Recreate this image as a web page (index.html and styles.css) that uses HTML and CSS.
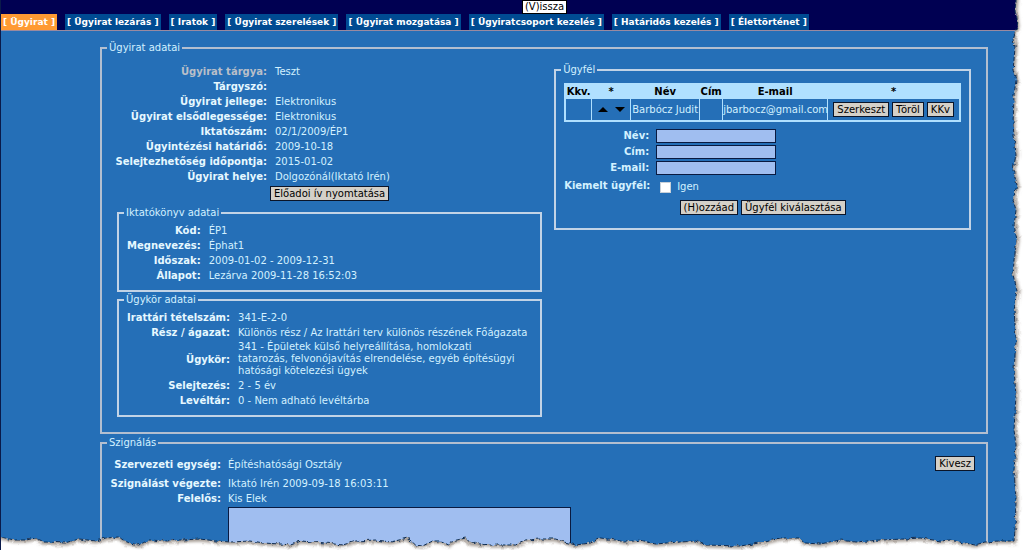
FILE: index.html
```html
<!DOCTYPE html>
<html lang="hu">
<head>
<meta charset="utf-8">
<title>Ügyirat</title>
<link rel="stylesheet" href="styles.css">
</head>
<body>
<div class="page">
  <header class="header">
    <div class="header-actions"><button type="button" class="back">(V)issza</button></div>
    <nav class="tabs">
      <a href="#" class="tab active">[ Ügyirat ]</a>
      <a href="#" class="tab">[ Ügyirat lezárás ]</a>
      <a href="#" class="tab">[ Iratok ]</a>
      <a href="#" class="tab">[ Ügyirat szerelések ]</a>
      <a href="#" class="tab">[ Ügyirat mozgatása ]</a>
      <a href="#" class="tab">[ Ügyiratcsoport kezelés ]</a>
      <a href="#" class="tab">[ Határidős kezelés ]</a>
      <a href="#" class="tab">[ Élettörténet ]</a>
    </nav>
  </header>

  <main class="main">
    <fieldset class="box outer case">
      <legend>Ügyirat adatai</legend>
      <div class="columns">
        <div class="left">
          <dl class="list case-list">
            <dt class="muted">Ügyirat tárgya:</dt><dd>Teszt</dd>
            <dt>Tárgyszó:</dt><dd></dd>
            <dt>Ügyirat jellege:</dt><dd>Elektronikus</dd>
            <dt>Ügyirat elsődlegessége:</dt><dd>Elektronikus</dd>
            <dt>Iktatószám:</dt><dd>02/1/2009/ÉP1</dd>
            <dt>Ügyintézési határidő:</dt><dd>2009-10-18</dd>
            <dt>Selejtezhetőség időpontja:</dt><dd>2015-01-02</dd>
            <dt>Ügyirat helye:</dt><dd>Dolgozónál(Iktató Irén)</dd>
          </dl>
          <div class="print"><button type="button" class="btn">Előadoi ív nyomtatása</button></div>
          <fieldset class="box inner">
            <legend>Iktatókönyv adatai</legend>
            <dl class="list book-list">
              <dt>Kód:</dt><dd>ÉP1</dd>
              <dt>Megnevezés:</dt><dd>Éphat1</dd>
              <dt>Időszak:</dt><dd>2009-01-02 - 2009-12-31</dd>
              <dt>Állapot:</dt><dd>Lezárva 2009-11-28 16:52:03</dd>
            </dl>
          </fieldset>
          <fieldset class="box inner">
            <legend>Ügykör adatai</legend>
            <dl class="list scope-list">
              <dt>Irattári tételszám:</dt><dd>341-E-2-0</dd>
              <dt>Rész / ágazat:</dt><dd>Különös rész / Az Irattári terv különös részének Főágazata</dd>
              <dt>Ügykör:</dt><dd class="multi">341 - Épületek külső helyreállítása, homlokzati<br>tatarozás, felvonójavítás elrendelése, egyéb építésügyi<br>hatósági kötelezési ügyek</dd>
              <dt>Selejtezés:</dt><dd>2 - 5 év</dd>
              <dt>Levéltár:</dt><dd>0 - Nem adható levéltárba</dd>
            </dl>
          </fieldset>
        </div>

        <fieldset class="box inner client">
          <legend>Ügyfél</legend>
          <table class="clients">
            <thead>
              <tr><th class="c-kkv">Kkv.</th><th class="c-move">*</th><th class="c-name">Név</th><th class="c-addr">Cím</th><th class="c-mail">E-mail</th><th>*</th></tr>
            </thead>
            <tbody>
              <tr>
                <td></td>
                <td class="move">
                  <button type="button" aria-label="Fel"><svg width="10" height="6" viewBox="0 0 10 6"><path d="M5 0L10 5H0Z"/></svg></button>
                  <button type="button" aria-label="Le"><svg width="10" height="6" viewBox="0 0 10 6"><path d="M0 0H10L5 5Z"/></svg></button>
                </td>
                <td>Barbócz Judit</td>
                <td></td>
                <td>jbarbocz@gmail.com</td>
                <td><div class="row-actions"><button type="button" class="btn">Szerkeszt</button><button type="button" class="btn">Töröl</button><button type="button" class="btn">KKv</button></div></td>
              </tr>
            </tbody>
          </table>
          <div class="form">
            <label for="name">Név:</label><input type="text" id="name" class="field">
            <label for="addr">Cím:</label><input type="text" id="addr" class="field">
            <label for="mail">E-mail:</label><input type="text" id="mail" class="field">
            <span class="form-label">Kiemelt ügyfél:</span>
            <span class="check"><input type="checkbox" id="vip"><label for="vip">Igen</label></span>
          </div>
          <div class="form-actions"><button type="button" class="btn">(H)ozzáad</button><button type="button" class="btn">Ügyfél kiválasztása</button></div>
        </fieldset>
      </div>
    </fieldset>

    <fieldset class="box outer assign">
      <legend>Szignálás</legend>
      <div class="assign-body">
        <div class="assign-main">
          <dl class="list assign-list">
            <dt>Szervezeti egység:</dt><dd class="unit">Építéshatósági Osztály</dd>
            <dt>Szignálást végezte:</dt><dd>Iktató Irén 2009-09-18 16:03:11</dd>
            <dt>Felelős:</dt><dd>Kis Elek</dd>
          </dl>
          <textarea class="note" aria-label="Megjegyzés"></textarea>
        </div>
        <button type="button" class="btn">Kivesz</button>
      </div>
    </fieldset>
  </main>

  <svg class="tear" viewBox="0 0 1024 550" preserveAspectRatio="none" aria-hidden="true">
    <defs>
      <filter id="rough" filterUnits="userSpaceOnUse" x="-10" y="-10" width="1054" height="580">
        <feTurbulence type="fractalNoise" baseFrequency="0.2" numOctaves="1" seed="4" result="n"/>
        <feDisplacementMap in="SourceGraphic" in2="n" scale="4" xChannelSelector="R" yChannelSelector="G"/>
      </filter>
      <filter id="soft" filterUnits="userSpaceOnUse" x="-10" y="-10" width="1054" height="580"><feGaussianBlur stdDeviation="1.5"/></filter>
      <path id="edge" d="M1016-20V0L1015 10 1017 27 1015 32 1013 40 1015 47 1014 60 1013 70 1016 80 1014 95 1013 125 1014 135 1016 155 1013 170 1017 185 1013 200 1016 210 1014 225 1017 240 1014 260 1013 275 1017 290 1014 310 1016 340 1014 370 1016 395 1014 430 1016 445 1014 470 1016 500 1015 530 1014 541 1000 541 985 542 975 545 965 543 950 540 940 541 920 538 905 539 880 540 855 542 840 540 820 544 805 543 800 538 780 538 765 542 740 546 705 545 695 541 680 542 655 544 640 540 625 542 615 540 600 538 590 543 575 545 568 543 555 539 540 539 525 540 515 545 490 545 470 543 465 538 452 541 448 545 440 541 432 541 422 546 415 545 407 538 390 542 375 540 355 541 342 545 325 543 300 541 290 545 280 544 262 543 250 541 230 542 215 541 200 539 180 540 165 541 148 540 138 545 125 542 118 537 105 538 95 541 78 539 65 543 43 542 35 538 25 540 13 540 0 537H-20"/>
      <path id="paper" d="M1016-20V0L1015 10 1017 27 1015 32 1013 40 1015 47 1014 60 1013 70 1016 80 1014 95 1013 125 1014 135 1016 155 1013 170 1017 185 1013 200 1016 210 1014 225 1017 240 1014 260 1013 275 1017 290 1014 310 1016 340 1014 370 1016 395 1014 430 1016 445 1014 470 1016 500 1015 530 1014 541 1000 541 985 542 975 545 965 543 950 540 940 541 920 538 905 539 880 540 855 542 840 540 820 544 805 543 800 538 780 538 765 542 740 546 705 545 695 541 680 542 655 544 640 540 625 542 615 540 600 538 590 543 575 545 568 543 555 539 540 539 525 540 515 545 490 545 470 543 465 538 452 541 448 545 440 541 432 541 422 546 415 545 407 538 390 542 375 540 355 541 342 545 325 543 300 541 290 545 280 544 262 543 250 541 230 542 215 541 200 539 180 540 165 541 148 540 138 545 125 542 118 537 105 538 95 541 78 539 65 543 43 542 35 538 25 540 13 540 0 537H-20V600H1080V-20Z"/>
      <clipPath id="outside"><use href="#paper"/></clipPath>
    </defs>
    <g filter="url(#rough)">
      <use href="#paper" fill="#fff"/>
      <g clip-path="url(#outside)"><use href="#edge" class="shade" filter="url(#soft)"/></g>
      <use href="#edge" class="rim"/>
    </g>
  </svg>
</div>
</body>
</html>
```
FILE: styles.css
```css
* { box-sizing: border-box; }

body {
  margin: 0;
  font: 10px/12px Verdana, "DejaVu Sans", sans-serif;
  color: #d3f1ff;
  background: #fff;
}

button, input, textarea { font: inherit; }

.page {
  position: relative;
  height: 100vh;
  overflow: hidden;
  background: #256fb7;
  border-left: 1px solid #0a1a4a;
}

.header {
  background: #000052;
  border-bottom: 1px solid #9a8aa0;
}

.header-actions {
  display: flex;
  justify-content: center;
  height: 14px;
  padding-left: 64px;
}

.back {
  padding: 0 2px;
  border: 1px solid #000;
  background: #fff;
  color: #000;
}

.tabs { display: flex; gap: 8px; }

.tab {
  padding: 2px;
  background: #004b92;
  color: #fff;
  font-size: 9px;
  font-weight: bold;
  text-decoration: none;
  white-space: nowrap;
}

.tab.active { background: #ff9a33; }

.main { padding: 11px 36px 0 99px; }

.box {
  min-width: 0;
  margin: 0;
  border: 2px solid #b3bfd0;
}

.box.inner { border-color: #c2d3e6; }

.box legend { padding: 0 2px; }

.case { padding: 10px 15px 15px; }
.case > legend { margin-left: -10px; }
.assign > legend { margin-left: -3px; }
.inner > legend { margin-left: -3px; }

.columns {
  display: grid;
  grid-template-columns: 1.02fr 1fr;
  gap: 12px;
  align-items: start;
}

.list {
  display: grid;
  grid-template-columns: max-content 1fr;
  column-gap: 8px;
  margin: 0;
  line-height: 15px;
}

.list dt {
  align-self: center;
  justify-self: end;
  color: #e6f8ff;
  font-weight: bold;
  white-space: nowrap;
}

.list dd { margin: 0; white-space: nowrap; }
.list .multi { padding: 1px 0; line-height: 12px; }
.list .muted { color: #b9bfc9; }

.case-list { grid-template-columns: 150px 1fr; }

.btn {
  height: 15px;
  padding: 0 3px;
  border: 1px solid #0a1428;
  background: #d4d0c8;
  color: #000;
  line-height: 12px;
  white-space: nowrap;
}

.print { display: flex; justify-content: center; padding: 2px 0 6px; }

.left .inner { padding: 4px 8px 7px; }
.left .inner + .inner { margin-top: 2px; }

.client { padding: 7px 8px 13px; }

.clients {
  width: 100%;
  border: 1px solid #b0e0ff;
  border-spacing: 1px;
  background: #b0e0ff;
  table-layout: fixed;
}

.clients th { padding: 0; color: #000; line-height: 13px; }
.clients td { height: 21px; padding: 0; background: #256fb7; white-space: nowrap; text-align: center; }
.c-kkv { width: 25px; }
.c-move { width: 38px; }
.c-name { width: 68px; }
.c-addr { width: 22px; }
.c-mail { width: 104px; }

.move button { padding: 0 2px; border: 0; background: none; }
.row-actions { display: flex; justify-content: center; gap: 3px; }

.form {
  display: grid;
  grid-template-columns: 85px 1fr;
  gap: 2px 7px;
  align-items: center;
  padding-top: 7px;
}

.form > label, .form-label { font-weight: bold; text-align: right; white-space: nowrap; }

.field {
  width: 120px;
  height: 14px;
  padding: 0 2px;
  border: 1px solid #0a1a40;
  border-radius: 0;
  background: #a0bef0;
}

.check { display: flex; align-items: center; gap: 6px; padding: 4px 0 1px 4px; }

.check input {
  appearance: none;
  width: 11px;
  height: 11px;
  margin: 0;
  border: 1px solid #c8d0d8;
  background: #fff;
}

.check input:checked { background: #0a1a40; }

.form-actions { display: flex; justify-content: center; gap: 3px; padding-top: 6px; }

.assign { height: 200px; margin-top: 3px; padding: 4px 11px 0 9px; }
.assign > legend { margin-left: -4px; }
.assign-body { display: flex; justify-content: space-between; align-items: flex-start; }
.assign-main { flex: 1; }
.assign-list { grid-template-columns: 110px 1fr; column-gap: 7px; }
.assign-list .unit { line-height: 23px; }
.assign .btn { margin-top: 3px; }

.note {
  display: block;
  width: 343px;
  height: 100px;
  margin: 1px 0 0 117px;
  border: 1px solid #0a1a40;
  background: #a0bef0;
  resize: none;
}

.tear {
  position: absolute;
  inset: 0;
  width: 100%;
  height: 100%;
  pointer-events: none;
}

.shade { fill: none; stroke: #a39a92; stroke-width: 5; }
.rim { fill: none; stroke: #0c2a50; stroke-width: 1; stroke-dasharray: 4 2; }
```
